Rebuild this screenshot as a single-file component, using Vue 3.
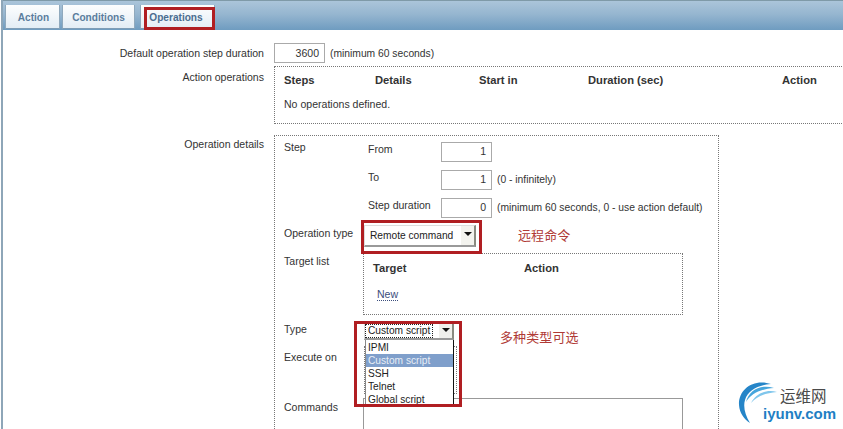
<script setup>
const headers = [
  { label: 'Steps', width: 91 },
  { label: 'Details', width: 104 },
  { label: 'Start in', width: 109 },
  { label: 'Duration (sec)', width: 194 },
  { label: 'Action', width: 60 }
]
const options = ['IPMI', 'Custom script', 'SSH', 'Telnet', 'Global script']
</script>

<template>
  <div class="page">
    <div class="frame">
      <nav class="tabbar">
        <span class="tab tab-action">Action</span>
        <span class="tab tab-conditions">Conditions</span>
        <span class="tab tab-operations">Operations</span>
      </nav>

      <main class="form">
        <div class="row row-default">
          <div class="label">Default operation step duration</div>
          <div class="value inline">
            <span class="num num-wide">3600</span>
            <span class="note">(minimum 60 seconds)</span>
          </div>
        </div>

        <div class="row row-actionops">
          <div class="label">Action operations</div>
          <div class="value">
            <div class="dotted ops">
              <div class="ops-head">
                <b v-for="h in headers" :key="h.label" :style="{ width: h.width + 'px' }">{{ h.label }}</b>
              </div>
              <div class="ops-empty">No operations defined.</div>
            </div>
          </div>
        </div>

        <div class="row row-details">
          <div class="label">Operation details</div>
          <div class="value">
            <div class="dotted details">
              <div class="d-row d-step">
                <div class="d-label">Step</div>
                <div class="steps">
                  <div class="step"><span class="s-label">From</span><span class="num">1</span></div>
                  <div class="step"><span class="s-label">To</span><span class="num">1</span><span class="note">(0 - infinitely)</span></div>
                  <div class="step"><span class="s-label">Step duration</span><span class="num">0</span><span class="note">(minimum 60 seconds, 0 - use action default)</span></div>
                </div>
              </div>

              <div class="d-row d-optype">
                <div class="d-label">Operation type</div>
                <div class="select select-remote">
                  <span>Remote command</span>
                  <i class="arrow"></i>
                </div>
              </div>

              <div class="d-row d-target">
                <div class="d-label">Target list</div>
                <div class="dotted targets">
                  <div class="t-head"><b class="t-target">Target</b><b>Action</b></div>
                  <a class="new">New</a>
                </div>
              </div>

              <div class="d-row d-type">
                <div class="d-label">Type</div>
                <div class="select select-type">
                  <span class="focus">Custom script</span>
                  <i class="arrow"></i>
                </div>
              </div>

              <div class="d-row d-exec">
                <div class="d-label">Execute on</div>
                <div class="dotted exec-box"></div>
              </div>

              <div class="d-row d-commands">
                <div class="d-label">Commands</div>
                <div class="textarea"></div>
              </div>
            </div>
          </div>
        </div>
      </main>
    </div>

    <ul class="dropdown">
      <li v-for="o in options" :key="o" :class="{ active: o === 'Custom script' }">{{ o }}</li>
    </ul>

    <div class="mark mark-tab"></div>
    <div class="mark mark-remote"></div>
    <div class="mark mark-type"></div>
    <div class="note-cn cn-remote">远程命令</div>
    <div class="note-cn cn-type">多种类型可选</div>

    <div class="logo">
      <svg class="swoosh" width="60" height="48" viewBox="0 0 60 48">
        <path d="M36 6C18 0 3 12 4 27c.6 8 5 14 11 18C10 37 8 29 10 22 13 12 24 7 36 6Z" fill="#2585c8" />
        <path d="M39 10C26 6 14 12 11 24 16 16 25 11 39 10Z" fill="#45a5dc" />
        <path d="M42 14C32 11 21 15 16 25 22 18 31 15 42 14Z" fill="#7fc6ec" />
      </svg>
      <span class="logo-cn">运维网</span>
      <span class="logo-en">iyunv.com</span>
    </div>
  </div>
</template>

<style>
html, body { margin: 0; padding: 0; background: #fff; }
</style>

<style scoped>
.page {
  position: relative;
  width: 843px;
  height: 429px;
  overflow: hidden;
  background: #fff;
  font-family: "Liberation Sans", Arial, sans-serif;
  font-size: 10.55px;
  color: #333;
  box-sizing: border-box;
  padding-left: 1px;
}
.frame {
  height: 429px;
  width: 900px;
  box-sizing: border-box;
  border-left: 2px solid #8ea6b8;
}
.tabbar {
  display: flex;
  align-items: flex-end;
  height: 30px;
  box-sizing: border-box;
  padding-left: 2px;
  border-top: 1px solid #7f9aa8;
  background: linear-gradient(180deg, #abc5da 0%, #96b6d0 45%, #6f9cc0 100%);
}
.tab {
  height: 24px;
  margin-bottom: 1px;
  box-sizing: border-box;
  padding-top: 7px;
  text-align: center;
  font-size: 10.1px;
  font-weight: bold;
  color: #5a7d9d;
  background: linear-gradient(180deg, #fdfefe, #e3edf5);
  border-bottom: 1px solid #7f9db6;
  border-left: 1px solid #8fa9bd;
  border-right: 1px solid #8fa9bd;
}
.tab-action { width: 55px; padding-left: 2px; }
.tab-conditions { width: 73px; margin-left: 2px; }
.tab-operations {
  width: 75px;
  margin-left: 5px;
  padding-right: 3px;
  color: #4a6d90;
}
.form { padding-top: 13px; }
.row { display: flex; }
.label {
  width: 261px;
  flex: none;
  text-align: right;
  line-height: 13px;
}
.value { margin-left: 10px; flex: none; }
.inline { display: flex; align-items: center; height: 20px; }
.row-default { height: 23px; }
.row-default .label { padding-top: 4px; }
.row-actionops { height: 69px; }
.row-actionops .label { padding-top: 5px; }
.dotted { border: 1px dotted #777; box-sizing: border-box; }
.ops { width: 600px; height: 58px; padding: 6px 9px; }
.ops-head { display: flex; height: 18px; }
.ops-head b { display: block; flex: none; line-height: 14px; font-size: 11.2px; }
.ops-empty { margin-top: 6px; line-height: 14px; }
.row-details .label { padding-top: 3px; }
.num {
  display: inline-block;
  width: 51px;
  height: 20px;
  box-sizing: border-box;
  border: 1px solid #aaa;
  text-align: right;
  padding: 1px 5px 0 0;
  line-height: 14px;
  background: #fff;
  flex: none;
}
.num-wide { width: 51px; padding-top: 2px; }
.note { margin-left: 5px; white-space: nowrap; font-size: 10.3px; }
.details { width: 445px; height: 320px; padding: 6px 0 0 9px; }
.d-row { display: flex; }
.d-label { width: 84px; flex: none; line-height: 13px; }
.d-step { height: 84px; }
.d-step .d-label { margin-top: -1px; }
.steps { display: flex; flex-direction: column; gap: 9px; }
.step { display: flex; align-items: center; height: 19px; }
.s-label { width: 73px; margin-top: -5px; flex: none; }
.d-optype { height: 29px; }
.d-optype .d-label { width: 80px; padding-top: 1px; }
.select {
  display: flex;
  align-items: center;
  box-sizing: border-box;
  background: #fff;
  color: #222;
  font-size: 10.2px;
  border-right: 2px solid #8a8a80;
  border-bottom: 2px solid #999;
  border-top: 1px solid #ddd;
  border-left: 1px solid #ddd;
}
.select-remote { width: 112px; height: 22px; padding-left: 5px; margin-top: -1px; justify-content: space-between; }
.arrow {
  width: 13px;
  height: 100%;
  flex: none;
  position: relative;
  background: #f3f3ee;
}
.arrow::after {
  content: "";
  position: absolute;
  left: 3px;
  top: 6px;
  border-left: 4px solid transparent;
  border-right: 4px solid transparent;
  border-top: 4px solid #111;
}
.d-target { height: 68px; }
.d-target .d-label { width: 79px; }
.targets { width: 320px; height: 62px; padding: 8px 9px; margin-top: -2px; }
.t-head { display: flex; line-height: 13px; font-size: 11.2px; }
.t-target { width: 151px; }
.new {
  display: inline-block;
  margin: 13px 0 0 4px;
  color: #3b4d7c;
  border-bottom: 1px dotted #3b4d7c;
  line-height: 12px;
}
.d-type { height: 28px; }
.d-type .d-label { width: 80px; }
.select-type { width: 90px; height: 18px; padding-left: 1px; margin-top: -1px; justify-content: space-between; }
.select-type .arrow { background: #f0f0ec; }
.select-type .arrow::after { top: 5px; }
.focus { outline: 1px dotted #222; padding: 0 2px; line-height: 12px; }
.d-exec { height: 50px; }
.d-exec .d-label { width: 80px; }
.exec-box { width: 93px; height: 48px; margin-top: -5px; flex: none; }
.d-commands .d-label { width: 79px; }
.textarea {
  width: 320px;
  height: 60px;
  border: 1px solid #999;
  box-sizing: border-box;
  margin-top: -3px;
  flex: none;
}
.dropdown {
  position: absolute;
  left: 365px;
  top: 340px;
  width: 89px;
  height: 67px;
  margin: 0;
  padding: 1px 0 0;
  list-style: none;
  box-sizing: border-box;
  background: #fff;
  border-right: 1px solid #111;
  border-left: 1px solid #888;
  color: #222;
  font-size: 10.2px;
}
.dropdown li { height: 13px; line-height: 13px; padding-left: 2px; }
.dropdown li.active { background: #7f9fcb; color: #e8eef6; }
.mark { position: absolute; border: 3px solid #b01e22; box-sizing: border-box; }
.mark-tab { left: 144px; top: 7px; width: 71px; height: 23px; }
.mark-remote { left: 361px; top: 220px; width: 121px; height: 34px; }
.mark-type { left: 354px; top: 321px; width: 108px; height: 86px; }
.note-cn {
  position: absolute;
  font-family: "Noto Sans CJK SC", sans-serif;
  font-size: 13px;
  letter-spacing: 0.1px;
  color: #b03a36;
  line-height: 16px;
}
.cn-remote { left: 518px; top: 227px; }
.cn-type { left: 500px; top: 329px; }
.logo { position: absolute; left: 735px; top: 378px; width: 108px; height: 51px; }
.swoosh { position: absolute; left: 0; top: 0; }
.logo-cn {
  position: absolute;
  left: 45px;
  top: 8px;
  font-family: "Noto Sans CJK SC", sans-serif;
  font-size: 15.5px;
  line-height: 18px;
  color: #4a4a4a;
}
.logo-en {
  position: absolute;
  left: 28px;
  top: 27px;
  font-size: 15px;
  line-height: 17px;
  font-weight: bold;
  color: #1f7fc4;
}
</style>
